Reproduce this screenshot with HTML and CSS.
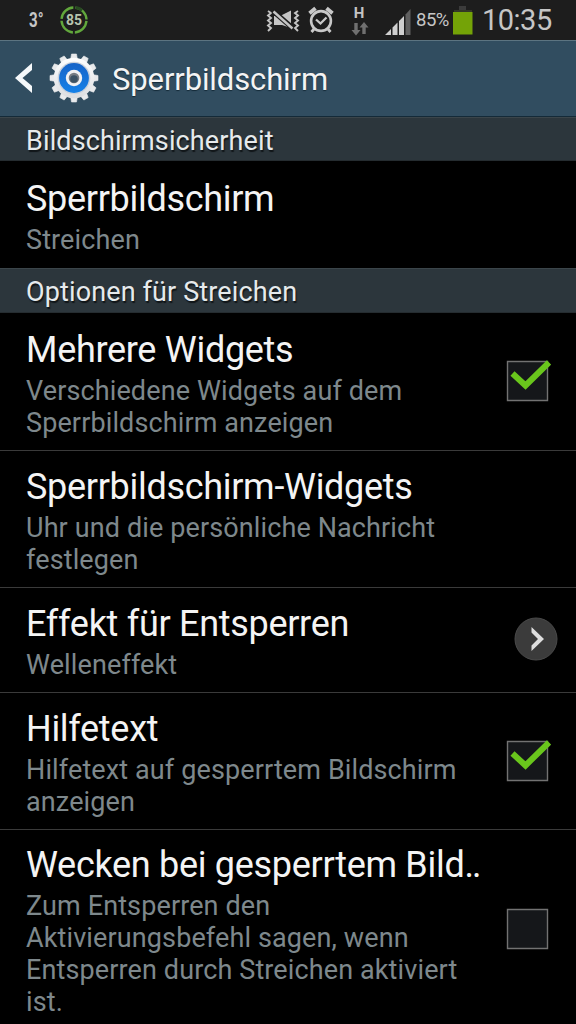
FILE: index.html
```html
<!DOCTYPE html>
<html lang="de">
<head>
<meta charset="utf-8">
<title>Sperrbildschirm</title>
<link rel="stylesheet" href="styles.css">
</head>
<body>
<div class="status">
  <span class="temp">3°</span>
  <svg class="ring" width="28" height="28" viewBox="0 0 28 28">
    <circle cx="14" cy="14" r="12.5" fill="none" stroke="#62a83c" stroke-width="2.4" stroke-dasharray="17.6 2.03" stroke-dashoffset="-1"/>
    <path d="M15.5 1.6A12.5 12.5 0 0 1 22 4.5" fill="none" stroke="#284a22" stroke-width="3"/>
    <text class="ring-text" x="14" y="19" text-anchor="middle" textLength="16" lengthAdjust="spacingAndGlyphs">85</text>
  </svg>
  <svg class="vibrate" width="34" height="26" viewBox="0 0 34 26" fill="none" stroke="#c4c4c4">
    <path d="M2 3l3 2-3 2.500 3 2.500-3 2.500 3 2.500-3 2.500 3 2.500-3 3M32 3l-3 2 3 2.500-3 2.500 3 2.500-3 2.500 3 2.500-3 2.500 3 3" stroke-width="1.900"/>
    <path d="M8 8h6l11-5.500V20l-9-3H8z" fill="#c4c4c4" stroke="none"/>
    <path d="M7 3l19 16.500" stroke="#1d1d1d" stroke-width="5"/>
    <path d="M7.500 3.500l19 17" stroke-width="2.400"/>
  </svg>
  <svg class="alarm" width="26" height="28" viewBox="0 0 26 28" fill="none" stroke="#c8c8c8">
    <circle cx="13" cy="15" r="9.900" stroke-width="2.600"/>
    <path d="M8 13.500l4.500 4 6-6" stroke-width="2.300"/>
    <path d="M1.500 7.200l6-5M24.500 7.200l-6-5" stroke-width="3.800"/>
    <path d="M6 23l-2.500 3M20 23l2.500 3" stroke-width="2.800"/>
  </svg>
  <div class="data">
    <span class="net">H</span>
    <svg width="18" height="14" viewBox="0 14 18 14"><path d="M3.300 15h3.400v7h2.800L5 27.500.5 22h2.800zM11.300 26h3.400v-6.500h2.800L13 14l-4.500 5.500h2.800z" fill="#707070"/></svg>
  </div>
  <svg class="signal" width="27" height="27" viewBox="0 0 27 27">
    <path d="M0 27l6-6v6zM7.500 27v-7.500l5-5V27zM14 27V13l5-5v19z" fill="#cfcfcf"/>
    <path d="M20.500 27V6.500l5-5.500v26z" fill="#606060"/>
  </svg>
  <span class="percent">85%</span>
  <svg class="battery" width="20" height="29" viewBox="0 0 20 29">
    <path d="M6 0h7v4H6z" fill="#3b3b3b"/><path d="M1 4h18v2H1z" fill="#343828"/><path d="M0 6h19.500v22.500H0z" fill="#74a307"/>
  </svg>
  <span class="clock">10:35</span>
</div>
<div class="bar">
  <svg class="back" width="18" height="32" viewBox="0 0 18 32"><path d="M17 1v7L7.500 16l9.500 8v7L0 16z" fill="#f5f8fa"/></svg>
  <svg class="gear" width="50" height="50" viewBox="-25 -25 50 50">
    <defs>
      <linearGradient id="blue" x2="0" y2="1"><stop stop-color="#1764c8"/><stop offset="1" stop-color="#1681e8"/></linearGradient>
      <linearGradient id="metal" x2="0" y2="1"><stop stop-color="#fff"/><stop offset="1" stop-color="#dcdde0"/></linearGradient>
      <path id="tooth" d="M-3.500-18l1-6h5l1 6v36l-1 6h-5l-1-6z"/>
    </defs>
    <g fill="#e9eaec" stroke="#e9eaec" stroke-width=".6" stroke-linejoin="round">
      <use href="#tooth"/><use href="#tooth" transform="rotate(30)"/><use href="#tooth" transform="rotate(60)"/><use href="#tooth" transform="rotate(90)"/><use href="#tooth" transform="rotate(120)"/><use href="#tooth" transform="rotate(150)"/>
    </g>
    <circle r="20.300" fill="url(#metal)"/>
    <circle r="16.300" fill="#cbd2dc"/>
    <circle r="14.900" fill="url(#blue)"/>
    <circle r="8.200" fill="#f1f1f2"/>
    <circle r="5.300" fill="#777c83"/>
    <circle cy="1" r="3.800" fill="#3c5264"/>
  </svg>
  <h1 class="heading">Sperrbildschirm</h1>
</div>
<h2 class="section first">Bildschirmsicherheit</h2>
<div class="row short">
  <div class="text"><div class="title">Sperrbildschirm</div><div class="sub">Streichen</div></div>
</div>
<h2 class="section">Optionen für Streichen</h2>
<div class="row tall lined">
  <div class="text"><div class="title">Mehrere Widgets</div><div class="sub">Verschiedene Widgets auf dem<br>Sperrbildschirm anzeigen</div></div>
  <svg class="check" width="46" height="46" viewBox="0 0 46 46"><path d="M2.500 4.500h40v39h-40z" fill="#15171a" stroke="#727272" stroke-width="1.400"/><path d="M7.500 16.500l13 12L44 5.500" fill="none" stroke="#69c61c" stroke-width="6"/></svg>
</div>
<div class="row mid lined">
  <div class="text"><div class="title">Sperrbildschirm-Widgets</div><div class="sub">Uhr und die persönliche Nachricht<br>festlegen</div></div>
</div>
<div class="row brief lined">
  <div class="text"><div class="title">Effekt für Entsperren</div><div class="sub">Welleneffekt</div></div>
  <svg class="more" width="44" height="44" viewBox="0 0 44 44"><circle cx="22" cy="22" r="21" fill="#3b3b3b" stroke="#4a4a4a"/><path d="M17.500 10v5.500l6.500 6.500-6.500 6.500V34L30 22z" fill="#dedede"/></svg>
</div>
<div class="row mid lined">
  <div class="text"><div class="title">Hilfetext</div><div class="sub">Hilfetext auf gesperrtem Bildschirm<br>anzeigen</div></div>
  <svg class="check" width="46" height="46" viewBox="0 0 46 46"><path d="M2.500 4.500h40v39h-40z" fill="#15171a" stroke="#727272" stroke-width="1.400"/><path d="M7.500 16.500l13 12L44 5.500" fill="none" stroke="#69c61c" stroke-width="6"/></svg>
</div>
<div class="row last">
  <div class="text"><div class="title">Wecken bei gesperrtem Bild<span class="dots">..</span></div><div class="sub">Zum Entsperren den<br>Aktivierungsbefehl sagen, wenn<br>Entsperren durch Streichen aktiviert<br>ist.</div></div>
  <svg class="check" width="46" height="46" viewBox="0 0 46 46"><path d="M2.500 4.500h40v39h-40z" fill="#15171a" stroke="#727272" stroke-width="1.400"/></svg>
</div>
</body>
</html>
```
FILE: styles.css
```css
* { box-sizing: border-box; }
body { margin: 0; width: 576px; height: 1024px; overflow: hidden; background: #000; font-family: Roboto, "Noto Sans", sans-serif; color: #f4f4f4; }
svg { display: block; flex: none; }
.status { height: 40px; background: #1d1d1d; display: flex; align-items: flex-start; color: #c6c6c6; white-space: nowrap; }
.temp { width: 31px; margin-left: 29px; font: bold 21px/40px Roboto, sans-serif; transform: scaleX(.72); transform-origin: left; }
.ring { margin-top: 6px; }
.ring-text { font: bold 14.500px Roboto, sans-serif; fill: #b7c4ae; }
.vibrate { margin: 8px 0 0 178px; }
.alarm { margin: 6px 0 0 8px; }
.data { width: 18px; margin: 5px 0 0 17px; }
.net { display: block; width: 16px; text-align: center; font: bold 15px/17px Roboto, sans-serif; color: #c4c4c4; }
.signal { margin: 8px 0 0 16px; }
.percent { width: 38px; margin-left: 4px; font-size: 18.500px; line-height: 41px; letter-spacing: -.5px; }
.battery { margin: 6px 0 0 -1px; }
.clock { margin-left: 9px; font-size: 29px; line-height: 40px; letter-spacing: -.5px; }
.bar { height: 77px; background: #314d60; border-top: 1px solid #5c7481; border-bottom: 1px solid #142a38; display: flex; align-items: center; padding-left: 15px; }
.back { margin-top: -1px; }
.gear { margin: -2px 0 0 16px; }
.heading { margin: 2px 0 0 13px; font-weight: 400; font-size: 31px; line-height: 40px; letter-spacing: -.12px; text-shadow: 0 1px 1px #142a38; }
.section { margin: 0; height: 45px; padding: 2px 0 0 26px; background: #2c363c; border-top: 1px solid #3b454a; border-bottom: 1px solid #252c30; font-weight: 400; font-size: 27px; line-height: 43px; letter-spacing: .13px; color: #e6eaec; text-shadow: 1px 2px 1px #101518; }
.first { height: 44px; }
.row { display: flex; align-items: center; justify-content: space-between; padding: 0 25px 0 26px; }
.lined { border-bottom: 1px solid #3a3a3a; }
.text { align-self: flex-start; padding-top: 15px; white-space: nowrap; }
.title { font-size: 36px; line-height: 42px; letter-spacing: -.3px; }
.dots { letter-spacing: -2px; }
.sub { margin-top: 4px; font-size: 27px; line-height: 32px; letter-spacing: .12px; color: #7e888c; }
.short { height: 107px; }
.tall { height: 138px; }
.tall .text { padding-top: 16px; }
.short .text { padding-top: 17px; }
.mid { height: 137px; }
.brief { height: 105px; padding-right: 18px; }
.last { height: 195px; }
.last .text { padding-top: 14px; }
.lined .check { margin-top: -3px; }
.more { margin-top: -2px; }
```
